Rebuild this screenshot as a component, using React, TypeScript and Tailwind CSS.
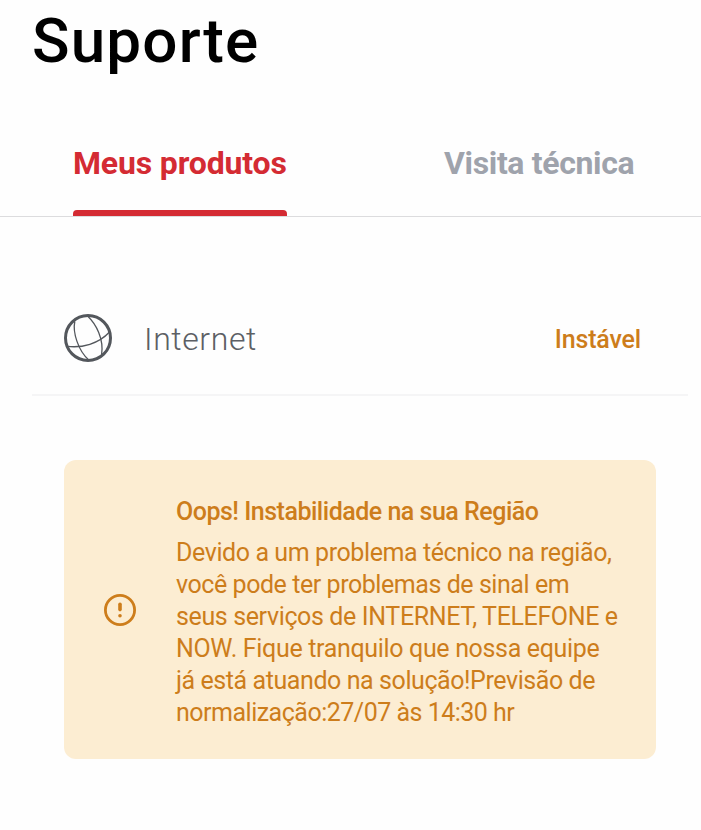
function GlobeIcon() {
  return (
    <svg className="h-12 w-12 shrink-0" viewBox="0 0 48 48" fill="none" stroke="#53575c" aria-hidden="true">
      <circle cx="24" cy="24" r="22.5" strokeWidth="3" />
      <g strokeWidth="1.3">
        <path d="M10.8 7.5C8.5 18 14 36.5 24.8 46" />
        <path d="M24 2.5C32 10 40 25 37.6 40.5" />
        <path d="M2.5 32.2C18 34.5 35 29.5 45.5 18" />
      </g>
    </svg>
  );
}

function AlertIcon() {
  return (
    <svg className="h-8 w-8 shrink-0" viewBox="0 0 32 32" fill="none" stroke="#cd7d1b" aria-hidden="true">
      <circle cx="16" cy="16" r="14.6" strokeWidth="2.8" />
      <path d="M16 10.2v5.4" strokeWidth="3.6" strokeLinecap="round" />
      <circle cx="16" cy="21.7" r="1.8" fill="#cd7d1b" stroke="none" />
    </svg>
  );
}

const messageLines = [
  { text: "Devido a um problema técnico na região,", tracking: "tracking-[-0.41px]" },
  { text: "você pode ter problemas de sinal em", tracking: "tracking-[-0.44px]" },
  { text: "seus serviços de INTERNET, TELEFONE e", tracking: "tracking-[-0.37px]" },
  { text: "NOW. Fique tranquilo que nossa equipe", tracking: "tracking-[-0.334px]" },
  { text: "já está atuando na solução!Previsão de", tracking: "tracking-[-0.42px]" },
  { text: "normalização:27/07 às 14:30 hr", tracking: "tracking-[-0.5px]" },
];

export default function App() {
  return (
    <main className="h-[830px] w-[701px] overflow-hidden bg-[#fefefe] font-['Roboto','Liberation_Sans',sans-serif]">
      <h1 className="h-[110px] pl-8 text-[62px] leading-[82px] font-medium tracking-[1.146px] text-black">Suporte</h1>

      <nav className="flex h-[107px] items-stretch border-b border-[#dcdcde] pl-[73px] text-[32px] font-bold">
        <button className="flex w-[214px] flex-col justify-between pt-8 text-left tracking-[-0.152px] whitespace-nowrap text-[#d42b33]">
          <span className="leading-[42px]">Meus produtos</span>
          <span className="h-1.5 w-full rounded-t-[4px] bg-[#d42b33]" />
        </button>
        <button className="ml-[157px] flex pt-8 leading-[42px] tracking-[-0.35px] whitespace-nowrap text-[#9fa3ac]">
          Visita técnica
        </button>
      </nav>

      <section className="mt-[65px] mr-[13px] ml-8 flex h-[114px] items-center border-b-2 border-[#f5f5f6] pr-[47px] pl-8">
        <GlobeIcon />
        <span className="ml-8 pt-0.5 text-[32px] leading-[42px] font-[350] tracking-[0.6px] text-[#5c5f64]">Internet</span>
        <span className="ml-auto pt-1 text-[25px] leading-8 font-medium tracking-[-0.159px] text-[#cd7d1b]">Instável</span>
      </section>

      <section className="mt-16 ml-16 flex h-[299px] w-[592px] items-center rounded-xl bg-[#fcedd2] pl-10 text-[25px] leading-8 text-[#cd7d1b]">
        <AlertIcon />
        <div className="ml-10 pt-1.5 whitespace-nowrap">
          <h2 className="mb-[9px] font-medium tracking-[-0.49px]">Oops! Instabilidade na sua Região</h2>
          <p>
            {messageLines.map((line) => (
              <span key={line.text} className={`block ${line.tracking}`}>{line.text}</span>
            ))}
          </p>
        </div>
      </section>
    </main>
  );
}
